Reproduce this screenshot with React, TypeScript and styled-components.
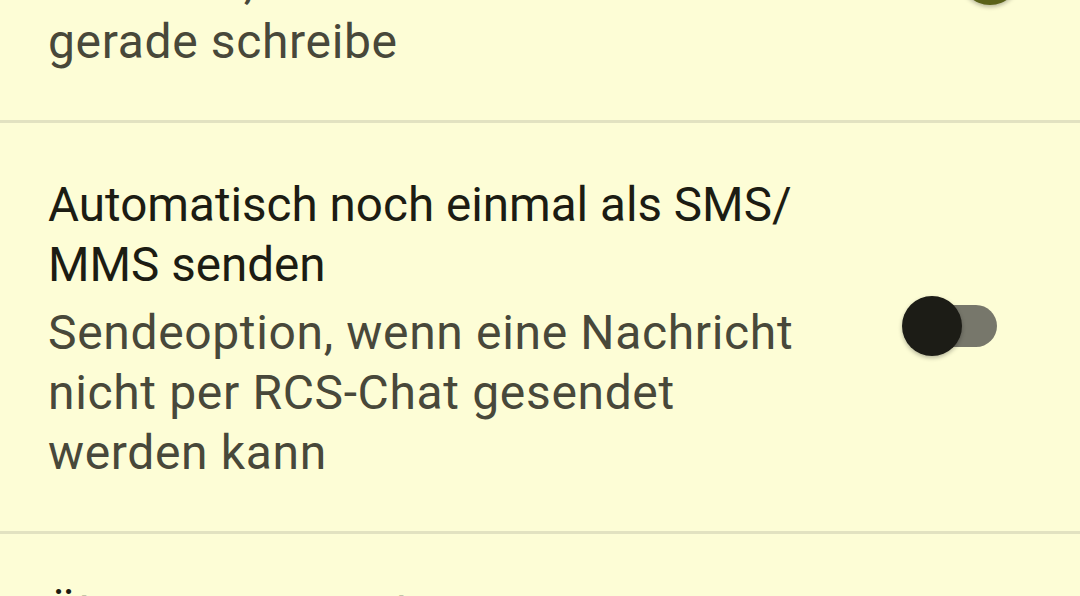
import React from "react";
import styled, { createGlobalStyle } from "styled-components";

const GlobalStyle = createGlobalStyle`
  html, body {
    margin: 0;
    padding: 0;
    background: #fdfdd6;
    overflow: hidden;
  }
  body {
    font-family: Roboto, "Noto Sans", sans-serif;
  }
`;

const Screen = styled.div`
  width: 1080px;
  height: 596px;
  overflow: hidden;
  background: #fdfdd6;
`;

const List = styled.div`
  display: flex;
  flex-direction: column;
  margin-top: -168px;
`;

const Item = styled.div`
  display: flex;
  align-items: center;
  padding: 52px 82px 48px 48px;
`;

const Divider = styled.div`
  height: 3px;
  background: #e2e2c1;
`;

const TextBlock = styled.div`
  flex: 1;
  display: flex;
  flex-direction: column;
  gap: 8px;
`;

const Title = styled.div`
  font-size: 47.6px;
  line-height: 60px;
  color: #1c1c13;
`;

const Summary = styled.div`
  font-size: 48px;
  line-height: 60px;
  letter-spacing: 0.65px;
  color: #48483a;
`;

const Switch = styled.div`
  position: relative;
  flex: none;
  width: 118px;
  height: 60px;
  margin: -6px -22px 0 0;
`;

const Track = styled.div<{ $on?: boolean }>`
  position: absolute;
  left: 7px;
  top: 9px;
  width: 88px;
  height: 42px;
  border-radius: 21px;
  background: ${(p) => (p.$on ? "#c9cf8c" : "#77776b")};
`;

const Thumb = styled.div<{ $on?: boolean }>`
  position: absolute;
  top: 0;
  left: ${(p) => (p.$on ? "58px" : "0")};
  width: 60px;
  height: 60px;
  border-radius: 50%;
  background: ${(p) => (p.$on ? "#5a6219" : "#1c1c16")};
  box-shadow: 0 2px 4px rgba(0, 0, 0, 0.28);
`;

const Toggle = ({ on }: { on?: boolean }) => (
  <Switch>
    <Track $on={on} />
    <Thumb $on={on} />
  </Switch>
);

const App = () => {
  return (
    <Screen>
      <GlobalStyle />
      <List>
        <Item>
          <TextBlock>
            <Title>Eingabestatus senden</Title>
            <Summary>
              Kontakte, wenn ich
              <br />
              gerade schreibe
            </Summary>
          </TextBlock>
          <Toggle on />
        </Item>
        <Divider />
        <Item>
          <TextBlock>
            <Title>
              Automatisch noch einmal als SMS/
              <br />
              MMS senden
            </Title>
            <Summary>
              Sendeoption, wenn eine Nachricht
              <br />
              nicht per RCS-Chat gesendet
              <br />
              werden kann
            </Summary>
          </TextBlock>
          <Toggle />
        </Item>
        <Divider />
        <Item>
          <TextBlock>
            <Title>Über WLAN senden</Title>
          </TextBlock>
        </Item>
      </List>
    </Screen>
  );
};

export default App;
